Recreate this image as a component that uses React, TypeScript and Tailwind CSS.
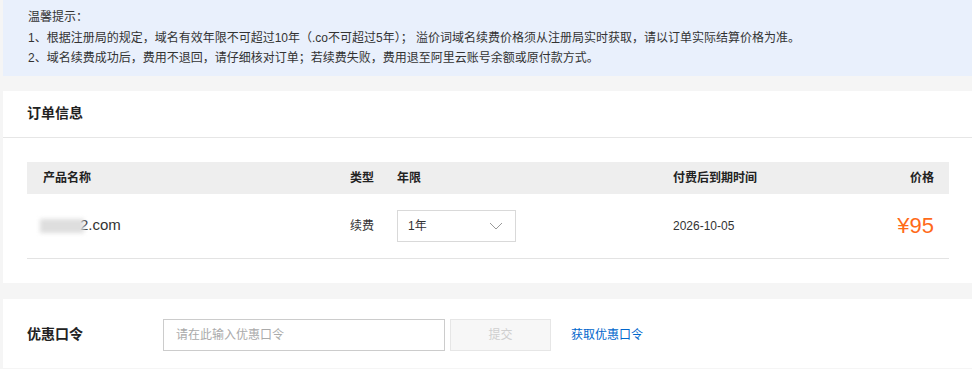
const font = { fontFamily: '"Liberation Sans", "Noto Sans CJK SC", sans-serif' };

function Chevron() {
  return (
    <svg width="14" height="8" viewBox="0 0 14 8" fill="none" stroke="#999" strokeWidth="1" aria-hidden="true">
      <path d="M1 1l6 6 6-6" />
    </svg>
  );
}

export default function App() {
  return (
    <div style={font} className="min-h-[369px] bg-[#f5f5f5] pl-[3px] text-[#333]">
      {/* 温馨提示 */}
      <div className="bg-[#e9f0fc] px-[25px] pt-[7px] pb-[7px] text-[12px] leading-[20.5px]">
        <p>温馨提示：</p>
        <p>
          1、根据注册局的规定，域名有效年限不可超过10年（.co不可超过5年）； 溢价词域名续费价格须从注册局实时获取，请以订单实际结算价格为准。
        </p>
        <p>2、域名续费成功后，费用不退回，请仔细核对订单；若续费失败，费用退至阿里云账号余额或原付款方式。</p>
      </div>

      {/* 订单信息 */}
      <div className="mt-[15px] bg-white">
        <div className="flex h-[46px] items-center px-6 text-[14px] font-bold text-[#222]">订单信息</div>
        <div className="h-px bg-[#e6e6e6]" />
        <div className="pt-6 pb-6 pl-6 pr-[23px]">
          <div className="grid h-8 grid-cols-[323px_47px_276px_150px_1fr] items-center bg-[#eeeeee] text-[12px] font-bold text-[#222]">
            <span className="pl-4">产品名称</span>
            <span>类型</span>
            <span>年限</span>
            <span>付费后到期时间</span>
            <span className="pr-[15px] text-right">价格</span>
          </div>
          <div className="grid h-[65px] grid-cols-[323px_47px_276px_150px_1fr] items-center border-b border-[#e3e3e3] text-[12px]">
            <span className="flex items-center pl-[13px] text-[15px] text-[#333]">
              <span className="h-[14px] w-[44px] bg-[#dedede] blur-[2px]" />
              <span className="-ml-[4px]">2.com</span>
            </span>
            <span>续费</span>
            <span>
              <span className="flex h-[32px] w-[119px] items-center justify-between border border-[#d9d9d9] pl-[10px] pr-[12px]">
                <span className="text-[12px]">1年</span>
                <Chevron />
              </span>
            </span>
            <span>2026-10-05</span>
            <span className="pr-[15px] text-right text-[22px] leading-none text-[#ff6a19]">¥95</span>
          </div>
        </div>
      </div>

      {/* 优惠口令 */}
      <div className="mt-[16px] bg-white px-6 pt-[20px] pb-[17px]">
        <div className="flex items-center">
          <span className="w-[136px] text-[14px] font-bold text-[#222]">优惠口令</span>
          <input
            placeholder="请在此输入优惠口令"
            className="h-[32px] w-[282px] border border-[#cccccc] px-[12px] text-[12px] outline-none placeholder:text-[#aaa]"
          />
          <button
            disabled
            className="ml-[5px] h-[32px] w-[101px] border border-[#e6e6e6] bg-[#f7f7f7] text-[12px] text-[#cfcfcf]"
          >
            提交
          </button>
          <a className="ml-[20px] text-[12px] text-[#0066cc]">获取优惠口令</a>
        </div>
      </div>
    </div>
  );
}
